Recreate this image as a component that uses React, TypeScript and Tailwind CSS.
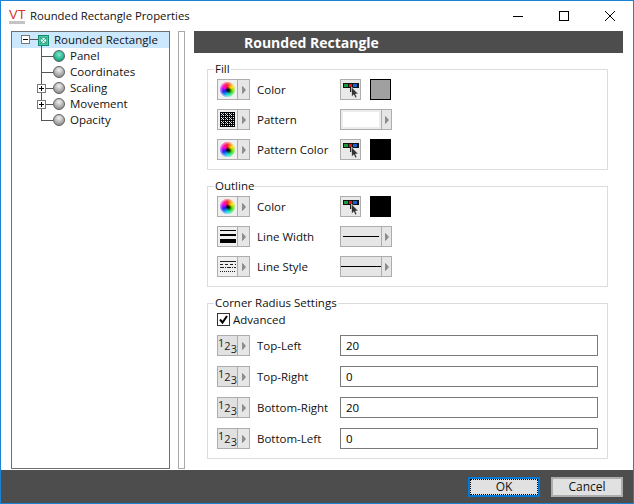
import type { ReactNode } from 'react';

const Arrow = () => (
  <svg width="4" height="8" viewBox="0 0 4 8">
    <path d="M0.5 0.5 L3.5 4 L0.5 7.5 Z" fill="#8f8f8f" stroke="#707070" strokeWidth="0.6" />
  </svg>
);

function SplitButton({ children, flat }: { children: ReactNode; flat?: boolean }) {
  return (
    <div className="flex h-[21px] w-[33px] shrink-0 border border-[#adadad] bg-[#e6e6e6]">
      <div className={`flex w-[19px] items-center justify-center ${flat ? 'bg-[#e1e1e1]' : 'bg-[#f0f0f0]'}`}>{children}</div>
      <div className="flex flex-1 items-center justify-center border-l border-[#adadad]">
        <Arrow />
      </div>
    </div>
  );
}

const ColorWheel = () => (
  <div className="relative h-[15px] w-[15px] rounded-full bg-[conic-gradient(#ff2020,#ffe000,#30e000,#00e0e0,#2020ff,#ff00e0,#ff2020)]">
    <div className="absolute inset-0 rounded-full bg-[radial-gradient(circle_at_55%_55%,#000000_4%,transparent_32%)]" />
    <div className="absolute inset-0 rounded-full bg-[radial-gradient(circle,transparent_45%,#f0f0f0b0_72%)]" />
  </div>
);

const PatternIcon = () => (
  <svg width="15" height="15" viewBox="0 0 15 15" shapeRendering="crispEdges">
    <rect x="0" y="0" width="15" height="15" fill="#000" />
    {[1, 3, 5, 7, 9, 11, 13].map((y) =>
      [1, 3, 5, 7, 9, 11, 13].map((x) => (
        <rect key={`${x}-${y}`} x={x} y={y} width="1" height="1" fill={(x + y) % 4 === 0 ? '#8fc4f0' : '#ffffff'} />
      )),
    )}
    {[2, 6, 10].map((y) =>
      [2, 6, 10].map((x) => <rect key={`w${x}-${y}`} x={x} y={y} width="1" height="1" fill="#b8d8f4" />),
    )}
  </svg>
);

const LineWidthIcon = () => (
  <svg width="16" height="13" viewBox="0 0 16 13" shapeRendering="crispEdges">
    <rect x="0" y="0" width="16" height="1" fill="#000" />
    <rect x="0" y="4" width="16" height="2" fill="#000" />
    <rect x="0" y="9" width="16" height="4" fill="#000" />
  </svg>
);

const LineStyleIcon = () => (
  <svg width="16" height="11" viewBox="0 0 16 11" stroke="#222" strokeWidth="1" shapeRendering="crispEdges">
    <line x1="0" y1="0.5" x2="16" y2="0.5" />
    <line x1="0" y1="3.5" x2="16" y2="3.5" strokeDasharray="3 2" />
    <line x1="0" y1="6.5" x2="16" y2="6.5" strokeDasharray="4 1 1 1" />
    <line x1="0" y1="10.5" x2="16" y2="10.5" strokeDasharray="1 1" />
  </svg>
);

const NumberIcon = () => (
  <div className="flex h-[17px] w-[19px] justify-center text-[11px] leading-none text-[#222]">
    <span className="self-start">1</span>
    <span className="self-center">2</span>
    <span className="self-end">3</span>
  </div>
);

function Eyedropper() {
  return (
    <div className="flex h-[21px] w-[21px] shrink-0 items-start justify-center border border-[#adadad] bg-[#e9e9e9] pt-[2px]">
      <svg width="16" height="16" viewBox="0 0 16 16" shapeRendering="crispEdges">
        <rect x="0" y="1" width="16" height="5" fill="#111" />
        <rect x="1" y="2" width="4" height="3" fill="#1c9a3a" />
        <rect x="6" y="2" width="3" height="3" fill="#d01c1c" />
        <rect x="10" y="2" width="4" height="3" fill="#1c5fd0" />
        <rect x="7" y="6" width="3" height="4" fill="#222" />
        <path d="M8.5 5 L8.5 15 L10.8 12.8 L12.2 16 L14 15.2 L12.6 12 L15.5 12 Z" fill="#333" stroke="#fff" strokeWidth="0.6" shapeRendering="auto" />
      </svg>
    </div>
  );
}

const Swatch = ({ grey }: { grey?: boolean }) => (
  <div className={`ml-[9px] h-[21px] w-[21px] shrink-0 border border-black ${grey ? 'bg-[#a0a0a0]' : 'bg-black'}`} />
);

function ComboBox({ children, white }: { children?: ReactNode; white?: boolean }) {
  return (
    <div className="flex h-[21px] w-[52px] shrink-0 border border-[#adadad] bg-[#e6e6e6]">
      <div className={`flex w-[40px] items-center ${white ? 'border-2 border-[#ececec] bg-white' : ''}`}>{children}</div>
      <div className="flex flex-1 items-center justify-center border-l border-[#adadad]">
        <Arrow />
      </div>
    </div>
  );
}

function Row({ icon, label, flat, children }: { icon: ReactNode; label: string; flat?: boolean; children: ReactNode }) {
  return (
    <div className="flex h-[21px] items-center">
      <SplitButton flat={flat}>{icon}</SplitButton>
      <span className="ml-[7px] w-[83px] shrink-0 whitespace-nowrap">{label}</span>
      {children}
    </div>
  );
}

function Group({ title, children }: { title: string; children: ReactNode }) {
  return (
    <fieldset className="border border-[#dcdcdc] pb-[9px] pl-[9px] pr-[9px]">
      <legend className="-ml-[3px] px-[1px] leading-[16px]">{title}</legend>
      {children}
    </fieldset>
  );
}

const Ball = ({ on }: { on?: boolean }) => (
  <div
    className={`h-[12px] w-[12px] shrink-0 rounded-full border border-[#5f5f5f] ${
      on
        ? 'bg-[radial-gradient(circle_at_50%_35%,#7fe8c8,#12a583_75%)]'
        : 'bg-[radial-gradient(circle_at_50%_30%,#f2f2f2,#8f8f8f_80%)]'
    }`}
  />
);

function TreeItem({ label, expand, last, on }: { label: string; expand?: boolean; last?: boolean; on?: boolean }) {
  return (
    <div className="flex h-[16px] items-center">
      <svg width="41" height="16" viewBox="0 0 41 16" className="shrink-0" shapeRendering="crispEdges">
        <line x1="29.5" y1="0" x2="29.5" y2={last ? 8 : 16} stroke="#555" />
        <line x1="29" y1="8.5" x2="41" y2="8.5" stroke="#555" />
        {expand && (
          <>
            <rect x="25.5" y="4.5" width="8" height="8" fill="#fff" stroke="#777" />
            <line x1="27" y1="8.5" x2="32" y2="8.5" stroke="#000" />
            <line x1="29.5" y1="6" x2="29.5" y2="11" stroke="#000" />
          </>
        )}
      </svg>
      <Ball on={on} />
      <span className="ml-[5px] whitespace-nowrap">{label}</span>
    </div>
  );
}

function NumberRow({ label, value }: { label: string; value: string }) {
  return (
    <Row icon={<NumberIcon />} label={label} flat>
      <input
        readOnly
        value={value}
        className="h-[21px] min-w-0 flex-1 border border-[#7a7a7a] bg-white pl-[5px] text-black outline-none"
      />
    </Row>
  );
}

export default function App() {
  return (
    <div className="flex h-[504px] w-[634px] flex-col overflow-hidden border border-[#1883d7] bg-white font-['Open_Sans',sans-serif] text-[11.5px] text-[#111]">
      {/* Title bar */}
      <div className="flex h-[30px] shrink-0 items-center">
        <div className="ml-[8px] flex w-[21px] flex-col items-start leading-none">
          <span className="text-[13px] leading-[11px] font-['Liberation_Sans',sans-serif] text-[#d8342c]">VT</span>
          <div className="mt-[1px] h-[3px] w-[16px] bg-[#c4c4c4]" />
        </div>
        <span className="flex-1 whitespace-nowrap text-[11.3px]">Rounded Rectangle Properties</span>
        <div className="flex w-[138px] text-black">
          <div className="flex h-[30px] w-[46px] items-center justify-center">
            <svg width="10" height="10" viewBox="0 0 10 10" shapeRendering="crispEdges">
              <line x1="0" y1="5.5" x2="10" y2="5.5" stroke="#000" />
            </svg>
          </div>
          <div className="flex h-[30px] w-[46px] items-center justify-center">
            <svg width="10" height="10" viewBox="0 0 10 10" shapeRendering="crispEdges">
              <rect x="0.5" y="0.5" width="9" height="9" fill="none" stroke="#000" />
            </svg>
          </div>
          <div className="flex h-[30px] w-[46px] items-center justify-center">
            <svg width="10" height="10" viewBox="0 0 10 10">
              <path d="M0 0 L10 10 M10 0 L0 10" stroke="#000" strokeWidth="1" />
            </svg>
          </div>
        </div>
      </div>

      {/* Body */}
      <div className="flex min-h-0 flex-1 pl-[10px]">
        {/* Tree */}
        <div className="mb-[1px] w-[159px] shrink-0 border border-[#6e6e6e] bg-white">
          <div className="flex h-[16px] items-center bg-[#cce8ff]">
            <svg width="37" height="16" viewBox="0 0 37 16" className="shrink-0" shapeRendering="crispEdges">
              <rect x="9.5" y="3.5" width="8" height="8" fill="#fff" stroke="#777" />
              <line x1="11" y1="7.5" x2="16" y2="7.5" stroke="#000" />
              <line x1="18" y1="7.5" x2="26" y2="7.5" stroke="#555" />
              <line x1="29.5" y1="12" x2="29.5" y2="16" stroke="#555" />
            </svg>
            <svg width="11" height="11" viewBox="0 0 11 11" className="-ml-[11px] shrink-0">
              <rect x="0.5" y="0.5" width="10" height="10" fill="#4cc8a4" stroke="#128a6c" />
              <circle cx="5.5" cy="5.5" r="3" fill="#e8fff8" stroke="#128a6c" strokeWidth="0.8" />
              <path d="M2 2 L9 9 M9 2 L2 9" stroke="#128a6c" strokeWidth="0.6" />
            </svg>
            <span className="ml-[5px] whitespace-nowrap">Rounded Rectangle</span>
          </div>
          <TreeItem label="Panel" on />
          <TreeItem label="Coordinates" />
          <TreeItem label="Scaling" expand />
          <TreeItem label="Movement" expand />
          <TreeItem label="Opacity" last />
        </div>

        {/* Splitter */}
        <div className="mb-[1px] ml-[8px] w-[7px] shrink-0 border border-[#a9a9a9] bg-white" />

        {/* Properties */}
        <div className="ml-[9px] mr-[10px] flex min-w-0 flex-1 flex-col">
          <div className="flex h-[22px] shrink-0 items-center bg-[#4d4d4d] pl-[50px] text-[14px] font-bold text-white">
            Rounded Rectangle
          </div>
          <div className="ml-[13px] mr-[15px] mt-[8px] flex flex-col gap-[8px]">
            <Group title="Fill">
              <div className="flex flex-col gap-[9px] pt-[2px]">
                <Row icon={<ColorWheel />} label="Color">
                  <Eyedropper />
                  <Swatch grey />
                </Row>
                <Row icon={<PatternIcon />} label="Pattern">
                  <ComboBox white />
                </Row>
                <Row icon={<ColorWheel />} label="Pattern Color">
                  <Eyedropper />
                  <Swatch />
                </Row>
              </div>
            </Group>
            <Group title="Outline">
              <div className="flex flex-col gap-[9px] pt-[2px]">
                <Row icon={<ColorWheel />} label="Color">
                  <Eyedropper />
                  <Swatch />
                </Row>
                <Row icon={<LineWidthIcon />} label="Line Width">
                  <ComboBox>
                    <div className="mx-[2px] h-px flex-1 bg-black" />
                  </ComboBox>
                </Row>
                <Row icon={<LineStyleIcon />} label="Line Style">
                  <ComboBox>
                    <div className="h-px flex-1 bg-black" />
                  </ComboBox>
                </Row>
              </div>
            </Group>
            <Group title="Corner Radius Settings">
              <div className="mb-[9px] mt-[2px] flex h-[13px] items-center">
                <div className="flex h-[13px] w-[13px] items-center justify-center border border-[#333] bg-white">
                  <svg width="11" height="11" viewBox="0 0 11 11">
                    <path d="M2 5.5 L4.5 8.5 L9 2" fill="none" stroke="#000" strokeWidth="2" />
                  </svg>
                </div>
                <span className="ml-[3px]">Advanced</span>
              </div>
              <div className="flex flex-col gap-[10px]">
                <NumberRow label="Top-Left" value="20" />
                <NumberRow label="Top-Right" value="0" />
                <NumberRow label="Bottom-Right" value="20" />
                <NumberRow label="Bottom-Left" value="0" />
              </div>
            </Group>
          </div>
        </div>
      </div>

      {/* Footer */}
      <div className="flex h-[33px] shrink-0 items-center justify-end gap-[11px] bg-[#4d4d4d] pr-[10px] text-[12px]">
        <button className="flex h-[20px] w-[72px] items-center justify-center border-2 border-[#0078d7] bg-[#e1e1e1]">
          <span className="flex h-full w-full items-center justify-center border border-dotted border-black">OK</span>
        </button>
        <button className="h-[20px] w-[72px] border-2 border-[#adadad] bg-[#e1e1e1] leading-none">Cancel</button>
      </div>
    </div>
  );
}
